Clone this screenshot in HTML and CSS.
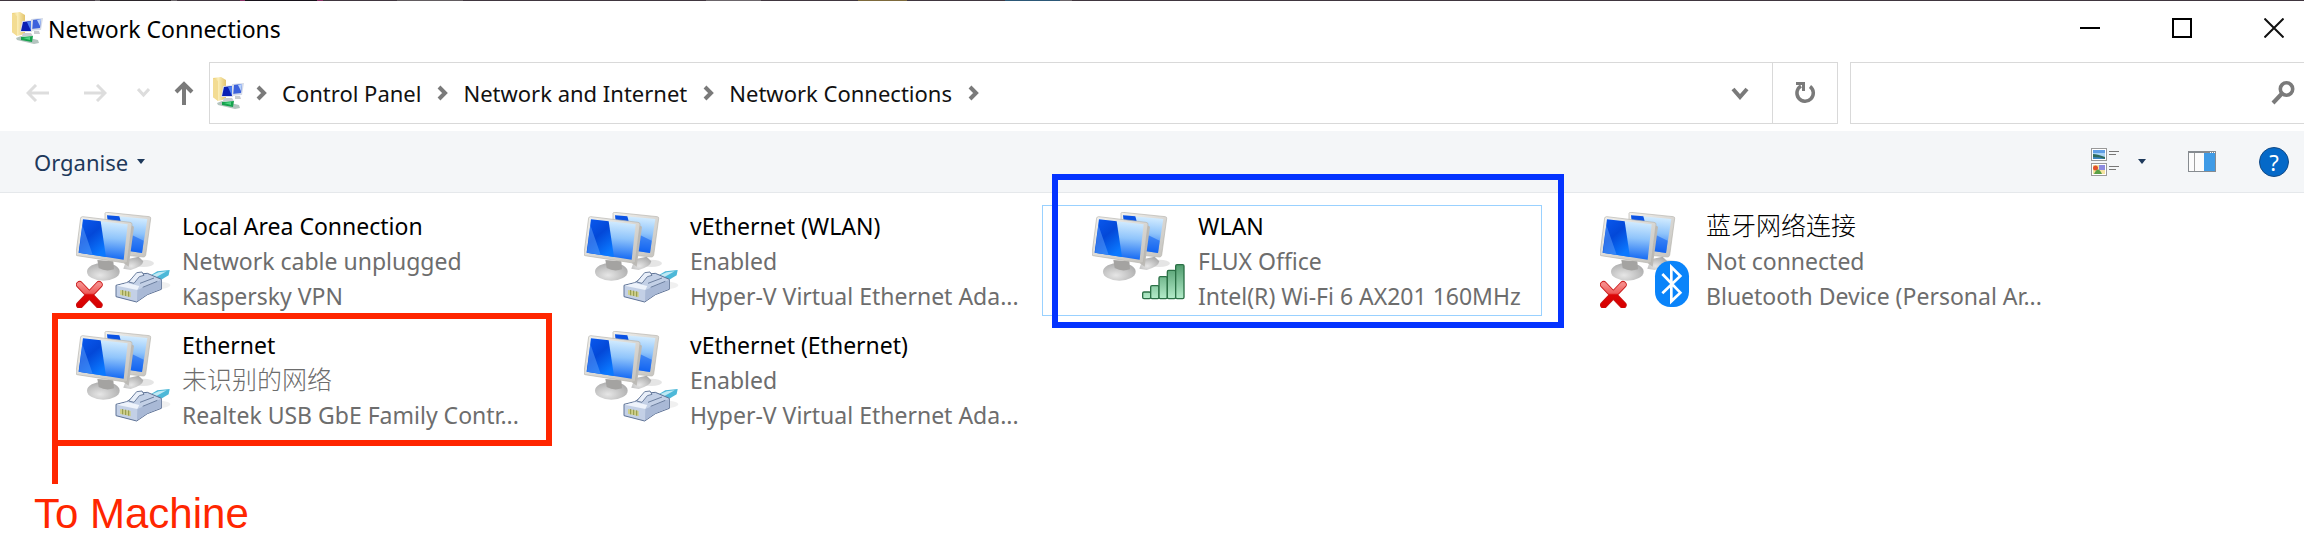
FILE: index.html
```
<!DOCTYPE html>
<html lang="en">
<head>
  <meta charset="UTF-8">
  <title>Network Connections</title>
  <meta name="viewport" content="width=device-width, initial-scale=1">
  <link rel="stylesheet" href="styles.css">
</head>
<body>
  <!-- shared icons -->
  <svg class="defs" aria-hidden="true">
    <defs>
      <linearGradient id="deep" x1="0" y1="0" x2="0.6" y2="1">
        <stop offset="0" stop-color="#0a5af0"/>
        <stop offset="0.5" stop-color="#0348d8"/>
        <stop offset="1" stop-color="#0a78ff"/>
      </linearGradient>
      <linearGradient id="shine" x1="0.5" y1="0" x2="0.4" y2="1">
        <stop offset="0" stop-color="#d8efff"/>
        <stop offset="0.45" stop-color="#8fc4fb"/>
        <stop offset="1" stop-color="#0b62f2"/>
      </linearGradient>
      <linearGradient id="frame" x1="0" y1="0" x2="1" y2="1">
        <stop offset="0" stop-color="#f2f1ee"/>
        <stop offset="1" stop-color="#c4c2bd"/>
      </linearGradient>
      <radialGradient id="base" cx="0.4" cy="0.7" r="0.7">
        <stop offset="0" stop-color="#e6e6e6"/>
        <stop offset="1" stop-color="#acacac"/>
      </radialGradient>
      <linearGradient id="cross" x1="0" y1="0" x2="0" y2="1">
        <stop offset="0" stop-color="#f58a88"/>
        <stop offset="0.42" stop-color="#ee5a58"/>
        <stop offset="0.5" stop-color="#dc0808"/>
        <stop offset="1" stop-color="#d80000"/>
      </linearGradient>
      <linearGradient id="bar" x1="0" y1="192" x2="0" y2="297" gradientUnits="userSpaceOnUse">
        <stop offset="0" stop-color="#4d9a6b"/>
        <stop offset="1" stop-color="#b4ecca"/>
      </linearGradient>
      <linearGradient id="folder" x1="0" y1="0" x2="1" y2="0">
        <stop offset="0" stop-color="#e9c86a"/>
        <stop offset="0.4" stop-color="#fbeeb8"/>
        <stop offset="1" stop-color="#e3c46c"/>
      </linearGradient>
    </defs>

    <symbol id="pc" viewBox="48 36 288 288">
      <ellipse cx="250" cy="190" rx="32" ry="11" fill="#000" opacity="0.1"/>
      <path d="M200 178 L236 170 L250 184 Q248 200 212 210 L190 206 Z" fill="url(#base)"/>
      <path d="M135 40 Q136 37 140 37 L268 50 Q273 51 272 56 L257 166 Q256 171 250 171 L200 166 L135 80 Z" fill="url(#frame)" stroke="#b5b3ae" stroke-width="2"/>
      <path d="M141 46 L262 57 L246 159 L160 146 Z" fill="url(#shine)"/>
      <path d="M141 46 L178 49 L182 64 L143 62 Z" fill="#0a52e4"/>
      <path d="M205 100 L205 152 L246 159 L251 122 Z" fill="#0c5ff0" opacity="0.55"/>
      <ellipse cx="130" cy="215" rx="49" ry="27" fill="url(#base)"/>
      <path d="M112 180 L160 184 L162 208 Q138 216 116 204 Z" fill="#a4a3a1"/>
      <path d="M190 188 L198 190 L214 76 L222 80 L206 200 Z" fill="#bcbab6"/>
      <path d="M62 54 Q63 50 68 50 L210 67 Q217 68 216 74 L202 185 Q201 190 195 189 L51 167 Q47 166 48 161 Z" fill="url(#frame)" stroke="#b5b3ae" stroke-width="2"/>
      <path d="M69 58 L203 73 L191 179 L56 158 Z" fill="url(#shine)"/>
      <path d="M69 58 L122 64 L138 171 L56 158 Z" fill="url(#deep)"/>
      <path d="M67 75 L98 164 L57 158 Z" fill="#5ea0fb" opacity="0.5"/>
    </symbol>

    <symbol id="plug" viewBox="48 36 288 288">
      <ellipse cx="285" cy="256" rx="46" ry="12" fill="#000" opacity="0.06"/>
      <path d="M262 232 L292 214 L329 210 L326 226 L306 238 L284 242 Z" fill="#4db8d8"/>
      <path d="M270 228 L296 217 L320 214 L288 232 Z" fill="#bfe9f4"/>
      <path d="M168 256 L200 248 L240 222 L262 220 L304 238 L304 268 L262 284 L230 306 L168 290 Z" fill="#c3d0e6" stroke="#5f7396" stroke-width="3" stroke-linejoin="round"/>
      <path d="M170 257 L202 249 L238 258 L232 270 Z" fill="#eef3fb"/>
      <path d="M232 270 L302 240 L303 266 L262 283 L231 304 Z" fill="#a9b9d6"/>
      <path d="M206 246 L230 218 L246 216 L252 226 L238 230 L222 250 Z" fill="#e9eff9" stroke="#6c7f9f" stroke-width="3"/>
      <path d="M240 250 L282 234 M248 262 L292 244" stroke="#6c7f9f" stroke-width="3"/>
      <path d="M180 270 L212 276 L212 292 L180 284 Z" fill="#cfd08a"/>
      <path d="M188 270 V286 M197 272 V288 M206 274 V290" stroke="#8f9548" stroke-width="3"/>
    </symbol>

    <symbol id="failed" viewBox="48 36 288 288">
      <path d="M59 254 L117 315 M117 254 L59 315" stroke="#c81818" stroke-width="22" stroke-linecap="round"/>
      <path d="M59 254 L117 315 M117 254 L59 315" stroke="url(#cross)" stroke-width="17" stroke-linecap="round"/>
    </symbol>

    <symbol id="signal" viewBox="48 36 288 288">
      <g fill="url(#bar)" stroke="#2b7046" stroke-width="4">
        <rect x="200" y="276" width="24" height="20" rx="4"/>
        <rect x="224" y="257" width="25" height="39" rx="4"/>
        <rect x="249" y="230" width="25" height="66" rx="4"/>
        <rect x="274" y="211" width="25" height="85" rx="4"/>
        <rect x="299" y="194" width="25" height="102" rx="4"/>
      </g>
    </symbol>

    <symbol id="bluetooth" viewBox="48 36 288 288">
      <rect x="213" y="183" width="102" height="138" rx="46" fill="#0a84fa"/>
      <path d="M235 222 L289 278 L262 304 V201 L289 228 L235 280" fill="none" stroke="#fff" stroke-width="8"/>
    </symbol>

    <symbol id="netfolder" viewBox="0 0 32 32">
      <path d="M1 1 L9 0 L14 3 V22 L6 24 L1 20 Z" fill="url(#folder)"/>
      <path d="M1 1 L6 4 V24 L1 20 Z" fill="#f3dc92"/>
      <path d="M20 7 L32 6 L30 18 L19 19 Z" fill="#d5dbe8"/>
      <path d="M21 8 L30 7 L29 16 L20 17 Z" fill="#3c62dc"/>
      <path d="M26 8 L30 7 L29 14 Z" fill="#b9d3fb"/>
      <path d="M11 9 L22 8 L21 20 L9 20 Z" fill="#dde0ea"/>
      <path d="M12 10 L20 9 L20 19 L10 19 Z" fill="#0a1fb4"/>
      <path d="M16 10 L20 9 L20 19 Z" fill="#4a7cf0"/>
      <path d="M12 21 H20 L22 24 H11 Z" fill="#c9ccd0"/>
      <path d="M23 19 H28 L29 22 H23 Z" fill="#c9ccd0"/>
      <path d="M5 26 L10 24 L27 28 L28 31 L23 32 L6 28 Z" fill="#b4c4bf"/>
      <path d="M10 25 L22 24 L21 30 L10 28 Z" fill="#16a34e"/>
      <path d="M12 26 L19 25 L19 28 Z" fill="#4ed584"/>
    </symbol>

    <symbol id="chevron" viewBox="0 0 10 16">
      <path d="M2 2 L8 8 L2 14" fill="none" stroke="#7a7a7a" stroke-width="4"/>
    </symbol>

    <symbol id="caret" viewBox="0 0 8 5">
      <path d="M0 0 H8 L4 5 Z" fill="#1e395b"/>
    </symbol>
  </svg>

  <div class="window">
    <header class="titlebar">
      <svg class="app-icon"><use href="#netfolder"/></svg>
      <h1 class="title">Network Connections</h1>
      <div class="window-buttons">
        <button type="button" aria-label="Minimise">
          <svg width="20" height="20" viewBox="0 0 20 20"><path d="M0 10 H20" stroke="#000" stroke-width="2"/></svg>
        </button>
        <button type="button" aria-label="Maximise">
          <svg width="20" height="20" viewBox="0 0 20 20"><rect x="1" y="1" width="18" height="18" fill="none" stroke="#000" stroke-width="2"/></svg>
        </button>
        <button type="button" aria-label="Close">
          <svg width="20" height="20" viewBox="0 0 20 20"><path d="M0.5 0.5 L19.5 19.5 M19.5 0.5 L0.5 19.5" stroke="#111" stroke-width="2"/></svg>
        </button>
      </div>
    </header>

    <div class="navbar">
      <div class="history">
        <button type="button" class="wide" aria-label="Back" disabled>
          <svg width="23" height="18" viewBox="0 0 23 18"><path d="M10 1 L2 9 L10 17 M2 9 H23" fill="none" stroke="#ddd" stroke-width="3"/></svg>
        </button>
        <button type="button" class="wide" aria-label="Forward" disabled>
          <svg width="23" height="18" viewBox="0 0 23 18"><path d="M13 1 L21 9 L13 17 M21 9 H0" fill="none" stroke="#ddd" stroke-width="3"/></svg>
        </button>
        <button type="button" aria-label="Recent locations" disabled>
          <svg width="13" height="10" viewBox="0 0 13 10"><path d="M1 1 L6.5 7 L12 1" fill="none" stroke="#ddd" stroke-width="3"/></svg>
        </button>
        <button type="button" class="up" aria-label="Up">
          <svg width="20" height="24" viewBox="0 0 20 24"><path d="M2 11 L10 3 L18 11 M10 3 V24" fill="none" stroke="#7a7a7a" stroke-width="4"/></svg>
        </button>
      </div>

      <div class="address">
        <nav class="breadcrumb" aria-label="Address">
          <svg class="app-icon"><use href="#netfolder"/></svg>
          <svg class="chevron"><use href="#chevron"/></svg>
          <a href="#">Control Panel</a>
          <svg class="chevron"><use href="#chevron"/></svg>
          <a href="#">Network and Internet</a>
          <svg class="chevron"><use href="#chevron"/></svg>
          <a href="#">Network Connections</a>
          <svg class="chevron"><use href="#chevron"/></svg>
        </nav>
        <button type="button" class="drop" aria-label="Previous locations">
          <svg width="18" height="13" viewBox="0 0 18 13"><path d="M2 2 L9 10 L16 2" fill="none" stroke="#7a7a7a" stroke-width="4"/></svg>
        </button>
        <button type="button" class="refresh" aria-label="Refresh">
          <svg width="22" height="22" viewBox="0 0 22 22">
            <path d="M16 4.5 A8.2 8.2 0 1 1 7 4" fill="none" stroke="#7a7a7a" stroke-width="3.5"/>
            <path d="M2 0 H11 V9 H8 V3 H2 Z" fill="#7a7a7a"/>
          </svg>
        </button>
      </div>

      <form class="search">
        <input type="search" aria-label="Search Network Connections">
        <button type="submit" aria-label="Search">
          <svg width="24" height="24" viewBox="0 0 24 24"><circle cx="15.5" cy="8" r="6.2" fill="none" stroke="#7a7a7a" stroke-width="3.6"/><path d="M11 12.5 L2 22" stroke="#7a7a7a" stroke-width="4"/></svg>
        </button>
      </form>
    </div>

    <div class="toolbar">
      <button type="button" class="organise">Organise <svg class="caret"><use href="#caret"/></svg></button>
      <div class="view-tools">
        <button type="button" class="view" aria-label="Change your view">
          <svg width="28" height="28" viewBox="0 0 28 28">
            <rect x="0.5" y="0.5" width="15" height="12" fill="#fff" stroke="#999"/>
            <rect x="2" y="2" width="12" height="9" fill="#a9d3f5"/>
            <path d="M2 2 H14 V5 H2 Z" fill="#5f9ee6"/>
            <path d="M2 6 Q6 6 14 9 V11 H2 Z" fill="#2f6b5c"/>
            <path d="M2 9 L9 9.5 L14 11 H2 Z" fill="#3f86c0"/>
            <rect x="0.5" y="15.5" width="15" height="12" fill="#fff" stroke="#999"/>
            <rect x="2" y="17" width="12" height="9" fill="#f4e3a0"/>
            <path d="M8 17 H14 V22 H8 Z" fill="#8d8be0"/>
            <circle cx="4.5" cy="20" r="2.5" fill="#e2502a"/>
            <path d="M3 26 Q7 17 11 26 Z" fill="#5aa046"/>
            <path d="M18 3.5 H28 M18 6.5 H25 M18 18.5 H28 M18 21.5 H25" stroke="#777"/>
          </svg>
        </button>
        <button type="button" class="more" aria-label="More options"><svg class="caret"><use href="#caret"/></svg></button>
        <button type="button" class="pane" aria-label="Show the preview pane">
          <svg width="28" height="22" viewBox="0 0 28 22">
            <rect x="0.5" y="0.5" width="27" height="20" fill="#fcfcfc" stroke="#868b90"/>
            <path d="M0 1 H28" stroke="#868b90" stroke-width="2"/>
            <path d="M22 1.5 H27" stroke="#fff" stroke-dasharray="1 1"/>
            <path d="M6.5 2 V20" stroke="#a0a0a0"/>
            <rect x="16" y="2" width="11" height="18" fill="#3f9be6"/>
          </svg>
        </button>
        <button type="button" class="help" aria-label="Get help">?</button>
      </div>
    </div>

    <main>
      <ul class="connections">
        <li class="connection">
          <div class="icon">
            <svg><use href="#pc"/><use href="#plug"/><use href="#failed"/></svg>
          </div>
          <div class="info">
            <p class="name">Local Area Connection</p>
            <p>Network cable unplugged</p>
            <p>Kaspersky VPN</p>
          </div>
        </li>
        <li class="connection">
          <div class="icon">
            <svg><use href="#pc"/><use href="#plug"/></svg>
          </div>
          <div class="info">
            <p class="name">vEthernet (WLAN)</p>
            <p>Enabled</p>
            <p>Hyper-V Virtual Ethernet Ada...</p>
          </div>
        </li>
        <li class="connection focused">
          <div class="icon">
            <svg><use href="#pc"/><use href="#signal"/></svg>
          </div>
          <div class="info">
            <p class="name">WLAN</p>
            <p>FLUX Office</p>
            <p>Intel(R) Wi-Fi 6 AX201 160MHz</p>
          </div>
          <div class="mark mark-blue"></div>
        </li>
        <li class="connection">
          <div class="icon">
            <svg><use href="#pc"/><use href="#failed"/><use href="#bluetooth"/></svg>
          </div>
          <div class="info">
            <p class="name zh" lang="zh-CN">蓝牙网络连接</p>
            <p>Not connected</p>
            <p>Bluetooth Device (Personal Ar...</p>
          </div>
        </li>
        <li class="connection">
          <div class="icon">
            <svg><use href="#pc"/><use href="#plug"/></svg>
          </div>
          <div class="info">
            <p class="name">Ethernet</p>
            <p class="zh" lang="zh-CN">未识别的网络</p>
            <p>Realtek USB GbE Family Contr...</p>
          </div>
          <div class="mark mark-red"></div>
          <div class="mark-label">To Machine</div>
        </li>
        <li class="connection">
          <div class="icon">
            <svg><use href="#pc"/><use href="#plug"/></svg>
          </div>
          <div class="info">
            <p class="name">vEthernet (Ethernet)</p>
            <p>Enabled</p>
            <p>Hyper-V Virtual Ethernet Ada...</p>
          </div>
        </li>
      </ul>
    </main>
  </div>
</body>
</html>
```
FILE: styles.css
```
* {
  box-sizing: border-box;
}
body {
  min-height: 100vh;
  margin: 0;
  background: #fff;
  color: #000;
  font-family: "Noto Sans", "Noto Sans CJK SC", sans-serif;
  font-size: 23px;
}
button {
  display: flex;
  align-items: center;
  justify-content: center;
  padding: 0;
  border: 0;
  background: none;
  font: inherit;
}
svg {
  display: block;
  flex: none;
}
.defs {
  position: absolute;
  width: 0;
  height: 0;
}

/* strip of desktop showing above the window */
.window::before {
  content: "";
  display: block;
  height: 1px;
  background: linear-gradient(90deg,
    #40363f 0 95px, #6b656a 95px 100px, #2b252a 100px 171px, #6b656a 171px 177px,
    #40363f 177px 240px, #8a3266 240px 245px, #17121a 245px 317px, #8a3266 317px 323px,
    #40363f 323px 397px, #625c60 397px 463px, #40363f 463px 706px, #6b656a 706px 761px,
    #40363f 761px 858px, #7d6a3c 858px 907px, #40363f 907px 1005px, #2c5877 1005px 1060px,
    #6b656a 1060px 1072px, #40363f 1072px);
}

/* title bar */
.titlebar {
  display: flex;
  align-items: center;
  height: 54px;
  padding-left: 11px;
}
.app-icon {
  width: 32px;
  height: 32px;
}
.title {
  flex: 1;
  margin: 0;
  padding: 2px 0 0 5px;
  font-size: 23px;
  font-weight: normal;
}
.window-buttons {
  display: flex;
  gap: 32px;
}
.window-buttons button {
  width: 60px;
  height: 54px;
}

/* navigation */
.navbar {
  display: flex;
  padding: 7px 0;
  font-size: 22px;
}
.history {
  display: flex;
  padding: 0 3px 0 8px;
}
.history button {
  width: 38px;
}
.history .wide {
  width: 58px;
}
.history .up {
  width: 44px;
}
.address {
  display: flex;
  flex: 1;
  height: 62px;
  border: 1px solid #d9d9d9;
}
.breadcrumb {
  display: flex;
  flex: 1;
  align-items: center;
  padding-left: 2px;
}
.breadcrumb a {
  margin: 0 15px;
  color: #111;
  text-decoration: none;
}
.breadcrumb .app-icon {
  margin-right: 11px;
}
.chevron {
  width: 12px;
  height: 16px;
}
.drop {
  width: 64px;
}
.refresh {
  width: 65px;
  border-left: 1px solid #d9d9d9;
}
.search {
  display: flex;
  width: 20%;
  max-width: 454px;
  margin-left: 12px;
  border: 1px solid #d9d9d9;
  border-right: 0;
}
.search input {
  flex: 1;
  min-width: 0;
  padding: 0 12px;
  border: 0;
  outline: 0;
  font: inherit;
}
.search button {
  width: 42px;
}

/* command bar */
.toolbar {
  display: flex;
  align-items: center;
  justify-content: space-between;
  height: 62px;
  padding: 0 15px 0 34px;
  border-bottom: 1px solid #e5e8eb;
  background: #f4f6f8;
  font-size: 22px;
}
.organise {
  gap: 9px;
  color: #1e395b;
}
.caret {
  width: 8px;
  height: 5px;
}
.view-tools {
  display: flex;
  align-items: center;
}
.more {
  width: 46px;
}
.pane {
  margin: 0 43px 0 23px;
}
.help {
  width: 30px;
  height: 30px;
  border: 1px solid #124a86;
  border-radius: 50%;
  background: #0569c8;
  color: #fff;
}

/* connections */
.connections {
  display: grid;
  grid-template-columns: repeat(auto-fill, 500px);
  gap: 8px;
  margin: 0;
  padding: 12px 26px 112px;
  list-style: none;
}
.connection {
  position: relative;
  display: flex;
  gap: 10px;
  height: 111px;
  padding: 3px 10px 0 49px;
  border: 1px solid transparent;
}
.focused {
  border-color: #99d1ff;
}
.icon {
  padding-top: 3px;
}
.icon svg {
  width: 96px;
  height: 96px;
}
.info {
  flex: 1;
  min-width: 0;
  color: #6d6d6d;
  white-space: nowrap;
}
.info p {
  margin: 0;
  line-height: 35px;
}
.info .name {
  color: #000;
}
.info .zh {
  padding-bottom: 5px;
  font-family: "Noto Sans CJK SC", sans-serif;
  font-size: 25px;
  font-weight: 300;
  line-height: 30px;
}

/* annotations drawn over the list */
.mark {
  position: absolute;
  border: 6px solid;
}
.mark-blue {
  top: -32px;
  right: -23px;
  bottom: -13px;
  left: 9px;
  border-color: #0433ff;
}
.mark-red {
  top: -12px;
  right: -27px;
  bottom: -12px;
  left: 25px;
  border-color: #ff2600;
}
.mark-red::after {
  content: "";
  position: absolute;
  top: 118px;
  left: -6px;
  width: 6px;
  height: 47px;
  background: #ff2600;
}
.mark-label {
  position: absolute;
  top: 165px;
  left: 7px;
  color: #ff2600;
  font-family: "Liberation Sans", sans-serif;
  font-size: 42px;
  line-height: 48px;
}
```
